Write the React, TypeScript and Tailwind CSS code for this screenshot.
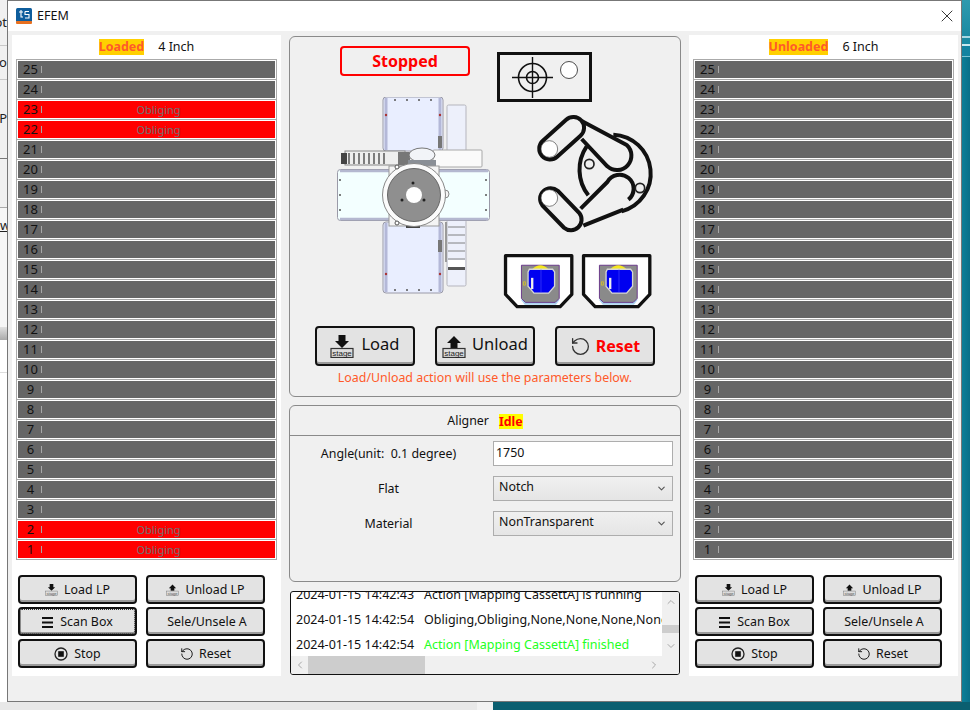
import React from "react";
import { ChevronDown, ChevronLeft, ChevronRight, ChevronUp, RotateCcw, X } from "lucide-react";

const slots = Array.from({ length: 25 }, (_, i) => 25 - i);

// Small stage pictogram used on the load and unload buttons
const StageIcon = ({ up, big }: { up?: boolean; big?: boolean }) => {
  const w = big ? 24 : 13;
  const h = big ? 23 : 12;
  return (
    <svg width={w} height={h} viewBox="0 0 24 23" className="shrink-0">
      {up ? (
        <path d="M12 1 L19 8 H15.5 V13 H8.5 V8 H5 Z" fill="#111" />
      ) : (
        <path d="M8.5 0 H15.5 V6 H19 L12 13 L5 6 H8.5 Z" fill="#111" />
      )}
      <rect x="1" y="13.5" width="22" height="9" fill="#ddd" stroke={big ? "#333" : "#777"} strokeWidth={big ? 1.2 : 0.9} />
      <text x="12" y="20.8" textAnchor="middle" fontSize="8" fill={big ? "#222" : "#555"} fontFamily="Liberation Sans, sans-serif">
        stage
      </text>
    </svg>
  );
};

const StopIcon = () => (
  <svg width="14" height="14" viewBox="0 0 14 14" className="shrink-0">
    <circle cx="7" cy="7" r="6" fill="none" stroke="#222" strokeWidth="1.3" />
    <rect x="4.2" y="4.2" width="5.6" height="5.6" fill="#111" />
  </svg>
);

const MenuIcon = () => (
  <svg width="11" height="11" viewBox="0 0 11 11" className="shrink-0">
    <path d="M0 1 H11 M0 5.5 H11 M0 10 H11" stroke="#111" strokeWidth="1.8" />
  </svg>
);

const Button = ({ children, focus, className }: { children: React.ReactNode; focus?: boolean; className?: string }) => (
  <div
    className={`flex items-center justify-center border-2 border-[#111] rounded-[4px] bg-[#e3e3e3] shadow-[inset_0_-2px_0_#9a9a9a] text-[#111] ${
      focus ? "outline-1 outline-dotted outline-[#333] -outline-offset-3" : ""
    } ${className ?? ""}`}
  >
    {children}
  </div>
);

const CassetteIcon = () => (
  <svg width="74" height="57" viewBox="20 22 222 172" className="shrink-0">
    <path d="M30 33 H230 V150 L195 187 H65 L30 150 Z" fill="#fff" stroke="#111" strokeWidth="10" strokeLinejoin="round" />
    <path d="M76 165 H194 L182 181 H88 Z" fill="#a9d3ef" />
    <path d="M78 62 H192 V162 L180 174 H90 L78 162 Z" fill="#8a8a8a" stroke="#6a3a8a" strokeWidth="3" />
    <path d="M110 74 Q135 50 160 74 Z" fill="#f5e61e" />
    <path d="M102 74 H172 L178 82 V125 L160 146 H116 L98 125 V82 Z" fill="#0000f0" stroke="#d5d5d5" strokeWidth="4" />
    <path d="M137 74 V144" stroke="#5a5aff" strokeWidth="1.5" />
    <rect x="107" y="100" width="7" height="34" fill="#eee" />
    <path d="M84 112 h6 v10 h-6 z" fill="none" stroke="#d8c22a" strokeWidth="2.5" />
  </svg>
);

const AlignerIcon = () => (
  <svg width="95" height="50" viewBox="0 0 95 50" className="shrink-0">
    <rect x="1.5" y="1.5" width="92" height="47" fill="#f0f0f0" stroke="#111" strokeWidth="3" />
    <circle cx="35.5" cy="25.5" r="14" fill="none" stroke="#111" strokeWidth="1.6" />
    <circle cx="35.5" cy="25.5" r="6" fill="none" stroke="#111" strokeWidth="1.6" />
    <path d="M15 25.5 H56 M35.5 5 V46" stroke="#111" strokeWidth="1.4" />
    <circle cx="72" cy="18" r="8.5" fill="#fff" stroke="#222" strokeWidth="0.8" />
  </svg>
);

// Traced in the coordinates of the 3x crop, so the numbers are large
const RobotIcon = () => (
  <svg width="125" height="122" viewBox="645 215 375 366" className="shrink-0" fill="none" stroke="#111" strokeWidth="12">
    <path d="M800 318 A125 125 0 0 0 805 465" />
    <path d="M880 283 A117 117 0 0 1 905 513" />
    <path d="M785 242 L920 314 A43 43 0 1 1 862 378 L785 296" strokeLinejoin="round" />
    <path d="M782 505 L862 425 A42 42 0 1 1 925 478" strokeLinejoin="round" />
    <path d="M790 556 L910 508" />
    <path d="M668.5 301 L738.5 238 A32 32 0 0 1 781.5 286 L711.5 349 A32 32 0 0 1 668.5 301 Z" />
    <path d="M713 451 L778 518 A32 32 0 0 1 732 562 L667 495 A32 32 0 0 1 713 451 Z" />
    <circle cx="688" cy="326" r="25" fill="#fff" stroke="#444" strokeWidth="2" />
    <circle cx="688" cy="473" r="25" fill="#fff" stroke="#444" strokeWidth="2" />
    <circle cx="808" cy="371" r="14" strokeWidth="5" stroke="#222" />
    <circle cx="960" cy="443" r="14" strokeWidth="5" stroke="#222" />
  </svg>
);

const MachineDrawing = () => (
  <svg width="153" height="197" viewBox="337 97 153 197" className="shrink-0">
    {/* top and bottom conveyors */}
    <rect x="383" y="97" width="60" height="54" rx="3" fill="#e9eeff" stroke="#9a9aa8" />
    <rect x="383" y="222" width="60" height="71" rx="3" fill="#e9eeff" stroke="#9a9aa8" />
    <path d="M386 98 V150 M440 98 V150 M386 223 V292 M440 223 V292" stroke="#b4b8d8" strokeWidth="3" />
    {/* side plates */}
    <rect x="447" y="105" width="19" height="46" rx="1.5" fill="#edf0fb" stroke="#b5b5bd" />
    <rect x="447" y="220" width="19" height="66" rx="1.5" fill="#edf0fb" stroke="#b5b5bd" />
    <path d="M448 227 H465 M448 235 H465 M448 243 H465 M448 251 H465 M448 259 H465" stroke="#666" strokeWidth="0.8" />
    <rect x="448" y="260" width="17" height="7" fill="#fff" />
    <rect x="448" y="267" width="17" height="3" fill="#555" />
    <rect x="445" y="222" width="2" height="40" fill="#9a9a9a" />
    <rect x="438" y="136" width="4" height="12" fill="#777" />
    <rect x="438" y="240" width="4" height="12" fill="#777" />
    {/* horizontal stage */}
    <rect x="337.5" y="169.5" width="152" height="51" rx="3" fill="#f3ffff" stroke="#9a9aa8" />
    <path d="M340 171 H488 M340 219 H488" stroke="#b4b8d0" strokeWidth="2.5" />
    {/* arm and cable chain */}
    <rect x="433" y="150" width="49" height="17" rx="1" fill="#fafafa" stroke="#a8a8a8" />
    <rect x="345" y="151" width="60" height="14" fill="#eee" stroke="#888" />
    <rect x="341" y="153" width="6" height="11" fill="#444" />
    <path d="M349 153 V164 M354 153 V164 M359 153 V164 M364 153 V164 M369 153 V164 M374 153 V164 M379 153 V164 M384 153 V164" stroke="#333" strokeWidth="1.2" />
    <rect x="398" y="152" width="12" height="13" fill="#777" />
    <ellipse cx="422" cy="155" rx="13" ry="7" fill="#f2f4f8" stroke="#777" />
    <rect x="408" y="160" width="28" height="6" fill="#8a8f96" />
    {/* rotating stage */}
    <rect x="389" y="166" width="50" height="60" fill="#f4f4f4" stroke="#999" />
    <rect x="406" y="224" width="14" height="4" fill="#444" />
    <circle cx="445" cy="194" r="4" fill="#f4f4f4" stroke="#888" />
    <circle cx="414" cy="195" r="31.5" fill="#fbfbfb" stroke="#888" />
    <circle cx="414" cy="195" r="26.5" fill="#8f8f8f" stroke="#666" />
    <circle cx="414" cy="195" r="8" fill="#fff" />
    <circle cx="413" cy="183" r="1.5" fill="#222" />
    <circle cx="402" cy="200" r="1.5" fill="#222" />
    <circle cx="424" cy="200" r="1.5" fill="#222" />
    <circle cx="397" cy="167" r="2" fill="#fff" stroke="#555" />
    <circle cx="397" cy="223" r="2" fill="#fff" stroke="#555" />
    {/* bolts */}
    <g fill="#555">
      <circle cx="395" cy="100" r="1" />
      <circle cx="407" cy="100" r="1" />
      <circle cx="419" cy="100" r="1" />
      <circle cx="431" cy="100" r="1" />
      <circle cx="395" cy="290" r="1" />
      <circle cx="407" cy="290" r="1" />
      <circle cx="419" cy="290" r="1" />
      <circle cx="431" cy="290" r="1" />
      <circle cx="340" cy="180" r="1" />
      <circle cx="340" cy="195" r="1" />
      <circle cx="340" cy="210" r="1" />
      <circle cx="486" cy="180" r="1" />
      <circle cx="486" cy="195" r="1" />
      <circle cx="486" cy="210" r="1" />
    </g>
    <circle cx="386" cy="115" r="1.2" fill="#a33" />
    <circle cx="440" cy="115" r="1.2" fill="#a33" />
    <circle cx="386" cy="274" r="1.2" fill="#a33" />
    <circle cx="440" cy="274" r="1.2" fill="#a33" />
  </svg>
);

const CassettePanel = ({ status, size, red }: { status: string; size: string; red: number[] }) => (
  <div className="w-[269px] h-[641px] bg-white flex flex-col">
    <div className="h-[24px] flex items-center justify-center text-[12.5px]">
      <span className="bg-[#ffd000] text-[#ff5a2a] font-bold h-[16px] leading-[16px]">{status}</span>
      <span className="ml-[14px] text-[#111]">{size}</span>
    </div>
    <div className="mx-[4px] w-[261px] border border-[#aaaaaa] bg-[#aaaaaa] flex flex-col gap-px">
      {slots.map((n) => (
        <div
          key={n}
          className={`h-[19px] border border-white flex items-center ${red.includes(n) ? "bg-[#ff0000]" : "bg-[#666666]"}`}
        >
          <span className="w-[22px] text-center text-[13px] leading-none text-[#111] shrink-0 pl-[3px] -mt-[1px]">{n}</span>
          <span className="ml-[1px] w-px h-[7px] bg-[#a8a8a8] shrink-0" />
          <span className="flex-1 text-center text-[11px] leading-none text-[#707070] -mt-[1px]">{red.includes(n) ? "Obliging" : ""}</span>
        </div>
      ))}
    </div>
    <div className="mt-[15px] ml-[6px] grid grid-cols-[119px_119px] gap-x-[9px] gap-y-[3px] auto-rows-[29px] text-[12.4px] leading-[20px]">
      <Button className="gap-[6px] pt-px"><StageIcon big={false} /> Load LP</Button>
      <Button className="gap-[6px] pt-px"><StageIcon up /> Unload LP</Button>
      <Button className="gap-[7px] pt-px" focus={status === "Loaded"}><MenuIcon /> Scan Box</Button>
      <Button className="pl-[3px] pt-px">Sele/Unsele A</Button>
      <Button className="gap-[6px] pt-px"><StopIcon /> Stop</Button>
      <Button className="gap-[5px] pt-px"><RotateCcw size={14} strokeWidth={1.6} /> Reset</Button>
    </div>
  </div>
);

const logRows = [
  { time: "2024-01-15 14:42:43", text: "Action [Mapping CassettA] is running", color: "text-[#111]" },
  { time: "2024-01-15 14:42:54", text: "Obliging,Obliging,None,None,None,None", color: "text-[#111]" },
  { time: "2024-01-15 14:42:54", text: "Action [Mapping CassettA] finished", color: "text-[#22ff22]" },
];

const LogBox = () => (
  <div className="ml-px mt-[9px] w-[390px] h-[84px] border border-[#111] rounded-[3px] bg-white flex flex-col overflow-hidden">
    <div className="flex-1 flex min-h-0">
      <div className="flex-1 min-w-0 overflow-hidden">
        <div className="-mt-[9px] pl-[5px]">
          {logRows.map((r, i) => (
            <div key={i} className="h-[25px] flex items-center whitespace-nowrap text-[12.5px] leading-none">
              <span className="w-[128px] shrink-0 text-[#111]">{r.time}</span>
              <span className={r.color}>{r.text}</span>
            </div>
          ))}
        </div>
      </div>
      <div className="w-[17px] bg-[#f0f0f0] flex flex-col items-center justify-between shrink-0">
        <ChevronUp size={12} color="#a8a8a8" className="mt-[4px]" />
        <div className="w-full h-[8px] bg-[#cdcdcd] mt-[9px]" />
        <ChevronDown size={12} color="#a8a8a8" className="mb-[4px]" />
      </div>
    </div>
    <div className="h-[18px] bg-[#f0f0f0] flex items-center shrink-0">
      <div className="w-[17px] flex justify-center"><ChevronLeft size={12} color="#a8a8a8" /></div>
      <div className="w-[117px] h-full bg-[#cdcdcd]" />
      <div className="flex-1" />
      <div className="w-[17px] flex justify-center mr-[17px]"><ChevronRight size={12} color="#a8a8a8" /></div>
    </div>
  </div>
);

const Field = ({ label, children }: { label: string; children: React.ReactNode }) => (
  <div className="flex items-center h-[25px]">
    <div className="w-[197px] text-center text-[12.4px] text-[#111] pt-[1px] whitespace-pre">{label}</div>
    {children}
  </div>
);

const Select = ({ value }: { value: string }) => (
  <div className="ml-[6px] w-[180px] h-full border border-[#adadad] bg-gradient-to-b from-[#f0f0f0] to-[#e5e5e5] flex items-center justify-between pl-[5px] pr-[5px] text-[12.4px] text-[#111] pb-[3px]">
    <span>{value}</span>
    <ChevronDown size={11} strokeWidth={2.4} color="#555" className="mt-[3px]" />
  </div>
);

const App: React.FC = () => {
  return (
    <div className="w-[970px] h-[710px] overflow-hidden flex flex-col bg-[#0a7f98] font-['Noto_Sans',sans-serif]">
      <div className="flex h-[702px]">
        {/* what is left of the window behind */}
        <div className="w-[7px] flex flex-col bg-white text-[13px] text-[#222] overflow-hidden shrink-0">
          <div className="h-[45px] bg-[#f0f0f0] flex items-center justify-end whitespace-nowrap">ot</div>
          <div className="h-[34px] bg-[#f0f0f0] border-t border-[#c8c8c8] flex items-center justify-end">lo</div>
          <div className="h-[79px] bg-[#f0f0f0] border-t border-[#c8c8c8] flex items-center justify-end">P</div>
          <div className="h-[49px] bg-[#f0f0f0] border-t border-[#777]" />
          <div className="h-[120px] bg-[#f6f6f6] border-t border-[#aaa]"><div className="mt-[8px] underline text-right">w</div></div>
          <div className="h-[13px] bg-gradient-to-b from-[#e0e0e0] to-[#aaa]" />
          <div className="flex-1 bg-white"><div className="mt-[32px] border-t border-[#ddd]" /></div>
        </div>

        <div className="w-[955px] h-[702px] border border-[#777] bg-[#f0f0f0] flex flex-col shrink-0">
          <div className="h-[30px] bg-white flex items-center pl-[8px] pr-[4px] shrink-0">
            <svg width="16" height="16" viewBox="0 0 16 16" className="shrink-0">
              <rect width="16" height="14" rx="1.5" fill="#0e5d9c" />
              <rect y="13" width="16" height="3" rx="1" fill="#e8701f" />
              <path d="M3 4 H7 M5 2 V9 H7 M9 3.5 H13 M9 3.5 V6.5 H13 V10 H9" stroke="#fff" strokeWidth="1.1" fill="none" />
            </svg>
            <span className="ml-[5px] text-[12.5px] text-[#111]">EFEM</span>
            <X size={20} strokeWidth={1} color="#111" className="ml-auto" />
          </div>

          <div className="flex pl-[4px] pt-[4px] gap-[8px]">
            <CassettePanel status="Loaded" size="4 Inch" red={[23, 22, 2, 1]} />

            <div className="w-[392px] pt-px flex flex-col shrink-0">
              <div className="h-[361px] border border-[#8a8a8a] rounded-[6px] flex flex-col">
                <div className="h-[272px] flex shrink-0">
                  <div className="w-[207px] flex flex-col items-start">
                    <div className="ml-[50px] mt-[9px] w-[130px] h-[30px] border-2 border-[#ff0000] rounded-[4px] flex items-center justify-center text-[#ff0000] font-bold text-[16px]">
                      Stopped
                    </div>
                    <div className="ml-[47px] mt-[21px]">
                      <MachineDrawing />
                    </div>
                  </div>
                  <div className="flex flex-col items-start pt-[15px]">
                    <AlignerIcon />
                    <div className="ml-[38px] mt-[10px]">
                      <RobotIcon />
                    </div>
                    <div className="ml-[5px] mt-[18px] flex gap-[4px]">
                      <CassetteIcon />
                      <CassetteIcon />
                    </div>
                  </div>
                </div>
                <div className="mt-[17px] pl-[25px] flex gap-[20px]">
                  <Button className="w-[100px] h-[40px] gap-[7px] text-[16.5px]"><StageIcon big /><span className="-mt-[4px]">Load</span></Button>
                  <Button className="w-[100px] h-[40px] gap-[6px] text-[16.5px]"><StageIcon up big /><span className="-mt-[4px]">Unload</span></Button>
                  <Button className="w-[100px] h-[40px] gap-[5px]">
                    <RotateCcw size={21} strokeWidth={1.5} color="#333" />
                    <span className="text-[16px] font-bold text-[#ff0000]">Reset</span>
                  </Button>
                </div>
                <div className="mt-[3px] text-center text-[12.4px] leading-[18px] text-[#ff5a2a]">Load/Unload action will use the parameters below.</div>
              </div>

              <div className="mt-[8px] h-[177px] border border-[#8a8a8a] rounded-[6px] flex flex-col">
                <div className="h-[30px] pt-px border-b border-[#8a8a8a] flex items-center justify-center text-[12.4px] text-[#111] shrink-0">
                  <span>Aligner</span>
                  <span className="ml-[10px] bg-[#ffff00] text-[#ff0000] font-bold leading-[15px]">Idle</span>
                </div>
                <div className="mt-[5px] flex flex-col gap-[10px]">
                  <Field label="Angle(unit:  0.1 degree)">
                    <div className="ml-[6px] w-[180px] h-full border border-[#adadad] bg-white flex items-center pl-[2px] text-[12.4px] text-[#111]">1750</div>
                  </Field>
                  <Field label="Flat"><Select value="Notch" /></Field>
                  <Field label="Material"><Select value="NonTransparent" /></Field>
                </div>
              </div>

              <LogBox />
            </div>

            <CassettePanel status="Unloaded" size="6 Inch" red={[]} />
          </div>
        </div>

        <div className="flex-1 bg-gradient-to-r from-[#0c7f98] to-[#0a6f88] flex flex-col">
          <div className="h-[36px] bg-gradient-to-b from-[#2f9aae] to-[#1a8aa2]" />
          <div className="h-[2px] bg-[#a8d8e2]" />
          <div className="h-[6px] bg-[#1a8aa2]" />
          <div className="h-[2px] bg-[#c8e8ee]" />
          <div className="h-[10px] bg-[#1383a0]" />
          <div className="h-px bg-[#7cc4d2]" />
        </div>
      </div>
      <div className="flex-1 flex">
        <div className="w-[477px] bg-[#e8e8e8]" />
        <div className="w-[16px] bg-[#f2f2f2]" />
        <div className="flex-1 bg-[#0b5f70]" />
      </div>
    </div>
  );
};

export default App;
